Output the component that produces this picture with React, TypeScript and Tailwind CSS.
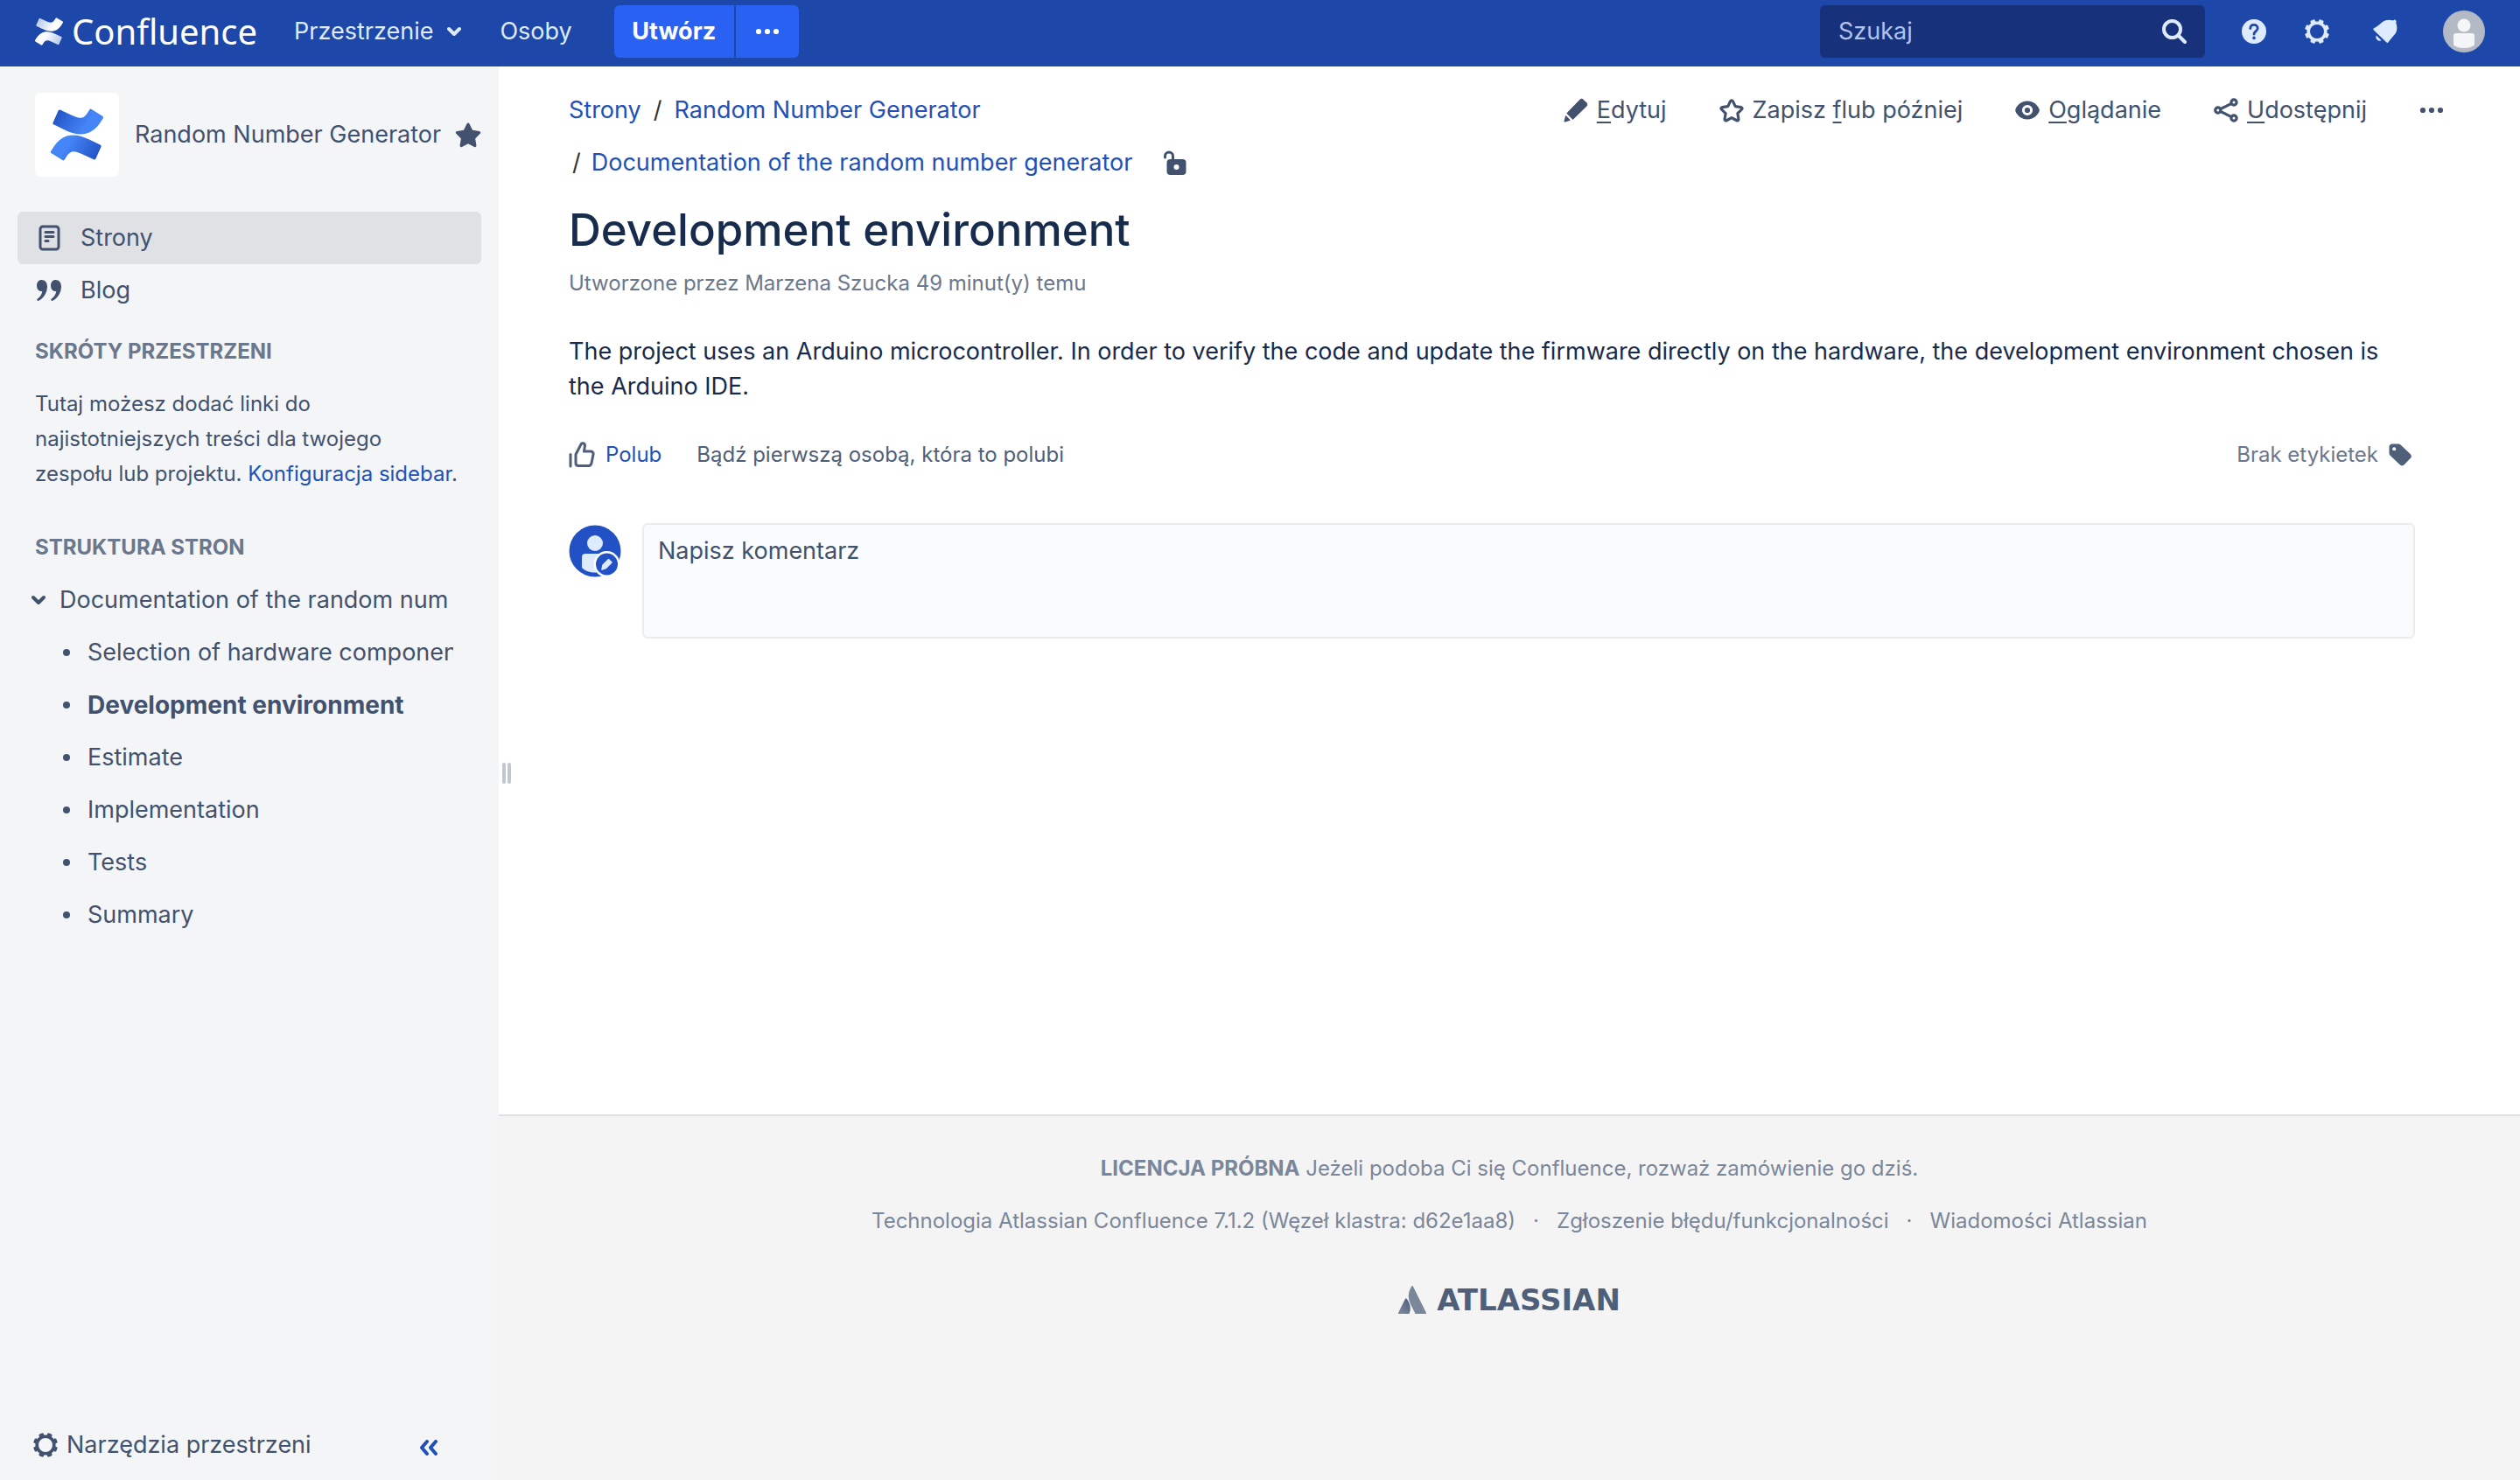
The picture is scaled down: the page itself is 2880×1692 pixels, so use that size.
import type { ReactNode } from 'react';

const CONF_PATH =
  'M.87 18.257c-.248.382-.53.875-.763 1.245a.764.764 0 0 0 .255 1.04l4.965 3.054a.764.764 0 0 0 1.058-.26c.199-.332.454-.763.733-1.221 1.967-3.247 3.945-2.853 7.508-1.146l4.957 2.337a.764.764 0 0 0 1.028-.382l2.364-5.346a.764.764 0 0 0-.382-1 599.851 599.851 0 0 1-4.965-2.361C10.911 10.97 5.224 11.185.87 18.257z';
const CONF_PATH_TOP =
  'M23.131 5.743c.249-.405.531-.875.764-1.25a.764.764 0 0 0-.256-1.034L18.675.404a.764.764 0 0 0-1.058.26c-.195.335-.451.763-.734 1.225-1.966 3.246-3.945 2.85-7.508 1.146L4.437.694a.764.764 0 0 0-1.027.382L1.046 6.422a.764.764 0 0 0 .382 1c1.039.49 3.105 1.467 4.965 2.361 6.698 3.246 12.392 3.029 16.738-4.04z';

function ConfluenceMark({ id, from, to, className }: { id: string; from: string; to: string; className: string }) {
  return (
    <svg viewBox="0 0 24 24" className={className} aria-hidden="true">
      <defs>
        <linearGradient id={`${id}-a`} x1="0" y1="0.4" x2="1" y2="0.7">
          <stop offset="0.3" stopColor={from} />
          <stop offset="1" stopColor={to} />
        </linearGradient>
        <linearGradient id={`${id}-b`} x1="1" y1="0.6" x2="0" y2="0.3">
          <stop offset="0.3" stopColor={from} />
          <stop offset="1" stopColor={to} />
        </linearGradient>
      </defs>
      <path d={CONF_PATH} fill={`url(#${id}-a)`} />
      <path d={CONF_PATH_TOP} fill={`url(#${id}-b)`} />
    </svg>
  );
}

type IconProps = { className?: string };

function ChevronDown({ className = '' }: IconProps) {
  return (
    <svg viewBox="0 0 16 12" className={`h-3 w-4 ${className}`} fill="none" stroke="currentColor" strokeWidth="4" strokeLinecap="round" strokeLinejoin="round" aria-hidden="true">
      <path d="M2 3l6 6 6-6" />
    </svg>
  );
}

function Dots({ className = '' }: IconProps) {
  return (
    <svg viewBox="0 0 28 28" className={`size-7 ${className}`} fill="currentColor" aria-hidden="true">
      <circle cx="4" cy="14" r="3.100" />
      <circle cx="14" cy="14" r="3.100" />
      <circle cx="24" cy="14" r="3.100" />
    </svg>
  );
}

function Gear({ className = '' }: IconProps) {
  return (
    <svg viewBox="0 0 28 28" className={`size-7 ${className}`} aria-hidden="true">
      <circle cx="14" cy="14" r="9.8" fill="none" stroke="currentColor" strokeWidth="3.6" />
      <g fill="currentColor">
        {[22.5, 67.5, 112.5, 157.5, 202.5, 247.5, 292.5, 337.5].map((a) => (
          <rect key={a} x="11.2" y="0" width="5.6" height="5" rx="1.4" transform={`rotate(${a} 14 14)`} />
        ))}
      </g>
    </svg>
  );
}

function SearchIcon() {
  return (
    <svg viewBox="0 0 28 28" className="size-7" fill="none" stroke="currentColor" strokeWidth="4" strokeLinecap="round" aria-hidden="true">
      <circle cx="11.5" cy="11.5" r="9.5" />
      <path d="M19 19l7 7" />
    </svg>
  );
}

function HelpIcon() {
  return (
    <svg viewBox="0 0 28 28" className="size-7" aria-hidden="true">
      <circle cx="14" cy="14" r="14" fill="currentColor" />
      <path d="M9.8 10.6C9.8 8 11.6 6.4 14 6.4s4.2 1.6 4.2 3.9c0 3.2-4.2 3.4-4.2 6.9" fill="none" stroke="#1d47a8" strokeWidth="2.8" strokeLinecap="round" />
      <circle cx="14" cy="21.4" r="1.8" fill="#1d47a8" />
    </svg>
  );
}

function BellIcon() {
  return (
    <svg viewBox="0 0 28 28" className="size-7" fill="currentColor" aria-hidden="true">
      <path d="M.8 10.500C5 8.500 7.500 5.500 11 3 14.500.6 19 .3 23 1.500l1-.8c1-.7 3 .8 2.600 2l-.4 1.300C27.800 8 28 13 25.500 16.500 22.500 20 20 23 17.500 26.300c-.5.800-1.300.8-2 .2L.7 12.200c-.6-.6-.6-1.300.1-1.700z" />
      <path d="M3.800 18.500l5.800 5.800c-3.800 1.500-7.500-2-5.800-5.800z" />
    </svg>
  );
}

function Avatar() {
  return (
    <svg viewBox="0 0 48 48" className="size-12" aria-hidden="true">
      <circle cx="24" cy="24" r="24" fill="#b3bac5" />
      <circle cx="24" cy="17" r="7.500" fill="#f4f5f7" />
      <path d="M12 29a3 3 0 0 1 3-3h18a3 3 0 0 1 3 3v10.500c-3 2.500-7.500 3.500-12 3.500s-9-1-12-3.500z" fill="#f4f5f7" />
    </svg>
  );
}

const STAR = 'M14 1.500c.7 0 1.200.4 1.500 1l3.200 6.700 7.200 1c1.400.2 1.900 1.700.9 2.700l-5.200 5.200 1.200 7.300c.2 1.300-1.200 2.200-2.300 1.600L14 23.500 7.500 27c-1.100.6-2.500-.3-2.300-1.600l1.200-7.300-5.200-5.200c-1-1-.5-2.500.9-2.700l7.200-1 3.200-6.700c.3-.6.800-1 1.500-1z';

function Star({ filled = false, className = 'size-7' }: { filled?: boolean; className?: string }) {
  return filled ? (
    <svg viewBox="0 0 28 28" className={className} fill="currentColor" aria-hidden="true">
      <path d={STAR} />
    </svg>
  ) : (
    <svg viewBox="-1.500 -1.500 31 31" className={className} fill="none" stroke="currentColor" strokeWidth="3.500" strokeLinejoin="round" aria-hidden="true">
      <path d={STAR} />
    </svg>
  );
}

function PageIcon() {
  return (
    <svg viewBox="0 0 26 30" className="h-[30px] w-[26px]" fill="none" stroke="currentColor" strokeWidth="3" strokeLinecap="round" aria-hidden="true">
      <rect x="2" y="2" width="21" height="26" rx="3" />
      <path d="M8 8.500h9M8 13.500h9" />
      <path d="M8 18.500h3" />
    </svg>
  );
}

function QuoteIcon() {
  return (
    <svg viewBox="0 0 30 26" className="h-[26px] w-[30px]" fill="currentColor" aria-hidden="true">
      <path d="M6.500 1C10.500 1 13 4 13 8.600 13 16 8.500 22.500 3.200 24.800c-1.700.6-2.600-1.300-1.200-2.300 3-2.200 4.800-5 5.300-8.500C3.500 14.400 1 11.500 1 7.500 1 3.700 3.300 1 6.500 1z" />
      <path d="M22.500 1C26.500 1 29 4 29 8.600 29 16 24.500 22.500 19.200 24.800c-1.700.6-2.600-1.300-1.200-2.300 3-2.200 4.800-5 5.300-8.500-3.800.4-6.300-2.500-6.300-6.500C17 3.700 19.300 1 22.500 1z" />
    </svg>
  );
}

function Pencil() {
  return (
    <svg viewBox="0 0 28 28" className="size-7" fill="currentColor" aria-hidden="true">
      <path d="M18.300 2c1.500-1.500 3-1.500 4.500-.1l3.400 3.400c1.400 1.500 1.400 3-.1 4.500L10.500 25 3.300 17.600z" />
      <path d="M2.300 19.800l5.600 5.700-6 1.900c-1 .3-1.600-.3-1.300-1.300z" />
    </svg>
  );
}

function Eye() {
  return (
    <svg viewBox="0 0 28 28" className="size-7" aria-hidden="true">
      <path d="M14 3.500c7 0 11.500 4.500 13.500 9 .4.900.4 2.100 0 3-2 4.500-6.500 9-13.500 9S2.500 20 .5 15.500c-.4-.9-.4-2.100 0-3C2.500 8 7 3.500 14 3.500z" fill="currentColor" />
      <circle cx="14" cy="14" r="4.600" fill="none" stroke="#fff" strokeWidth="3" />
    </svg>
  );
}

function Share() {
  return (
    <svg viewBox="0 0 28 28" className="size-7" fill="none" stroke="currentColor" strokeWidth="3.200" aria-hidden="true">
      <circle cx="4.800" cy="14" r="3.100" />
      <circle cx="23" cy="5" r="3.100" />
      <circle cx="23" cy="23" r="3.100" />
      <path d="M8 12.400l12.200-6M8 15.600l12.200 6" />
    </svg>
  );
}

function Unlock() {
  return (
    <svg viewBox="0 0 26 28" className="h-7 w-[26px]" aria-hidden="true">
      <path d="M1.500 8V6.500a4.500 4.500 0 0 1 9 0V12" fill="none" stroke="currentColor" strokeWidth="3" strokeLinecap="round" />
      <rect x="3.500" y="10" width="22" height="18" rx="4" fill="currentColor" />
      <circle cx="14.500" cy="19" r="3" fill="#fff" />
    </svg>
  );
}

function Thumb() {
  return (
    <svg viewBox="0 0 30 30" className="size-[30px]" fill="none" stroke="currentColor" strokeWidth="3" strokeLinejoin="round" strokeLinecap="round" aria-hidden="true">
      <path d="M8 14.500L13.500 4c1-3.500 5.500-3 4.800 1.500L17.500 11H25c2 0 3.500 1.500 3 3.500l-2 10c-.4 1.800-1.500 3-3.500 3h-11c-2 0-3.500-1.200-3.500-3z" />
      <path d="M2 14.500V28" />
    </svg>
  );
}

function Tag() {
  return (
    <svg viewBox="0 0 26 26" className="size-[26px]" aria-hidden="true">
      <path d="M.5 4C.5 2 2 .5 4 .5h6.500c1.300 0 2.400.5 3.300 1.300l10.800 10.300c1.600 1.600 1.600 3.400.1 5l-7 7.200c-1.600 1.500-3.400 1.500-5 0L1.900 14C1 13 .5 12 .5 10.700z" fill="currentColor" />
      <circle cx="6.200" cy="6.200" r="2" fill="#fff" />
    </svg>
  );
}

function CommentAvatar() {
  return (
    <svg viewBox="0 0 60 60" className="mt-0.5 size-[60px]" aria-hidden="true">
      <circle cx="30" cy="30" r="29.500" fill="#2151c4" />
      <circle cx="30" cy="21" r="9" fill="#deebff" />
      <path d="M15 37a4 4 0 0 1 4-4h22a4 4 0 0 1 4 4v12c-4 4-9 5.500-15 5.500S19 53 15 49z" fill="#deebff" />
      <circle cx="43.500" cy="45" r="15" fill="#fff" />
      <circle cx="43.500" cy="45" r="12.500" fill="#2151c4" />
      <path d="M45.500 39.500l3.500 3.500-6.500 6.500-4.500 1.500 1-5z" fill="#deebff" stroke="#deebff" strokeWidth="1.500" strokeLinejoin="round" />
    </svg>
  );
}

function AtlassianMark() {
  return (
    <svg viewBox="0 0 24 24" className="size-8" aria-hidden="true">
      <defs>
        <linearGradient id="atl" x1="1" y1="0.1" x2="0.3" y2="1">
          <stop offset="0" stopColor="#505f79" />
          <stop offset="1" stopColor="#7a869a" />
        </linearGradient>
      </defs>
      <path d="M7.120 11.084a.683.683 0 00-1.160.126L.075 22.974a.703.703 0 00.630 1.018h8.190a.678.678 0 00.630-.390c1.767-3.650.696-9.203-2.406-12.520z" fill="url(#atl)" />
      <path d="M11.434.386a15.515 15.515 0 00-.906 15.317l3.950 7.900a.703.703 0 00.628.388h8.190a.703.703 0 00.630-1.017L12.630.380a.664.664 0 00-1.196.006z" fill="#7a869a" />
    </svg>
  );
}

function ToolButton({ icon, children }: { icon: ReactNode; children: ReactNode }) {
  return (
    <button type="button" className="flex h-[60px] items-center gap-2.5 px-[30px] whitespace-nowrap text-[#42526e]">
      {icon}
      <span>{children}</span>
    </button>
  );
}

const U = ({ children }: { children: ReactNode }) => <span className="underline decoration-2 underline-offset-4">{children}</span>;

const PAGES = ['Selection of hardware components', 'Development environment', 'Estimate', 'Implementation', 'Tests', 'Summary'];

export default function App() {
  return (
    <div className="flex min-h-screen flex-col bg-white font-['Inter','Noto_Sans',sans-serif] text-[27px] leading-10 text-[#172b4d]">
      <header className="flex h-[76px] items-center border-b border-[#2a4a94] bg-[#1d47a8] pr-10 pb-[3px] pl-10 text-[#deebff]">
        <a href="#home" className="flex items-center gap-2.5 text-white">
          <ConfluenceMark id="hdr" from="#ffffff" to="#b4c6ec" className="size-8" />
          <span className="font-['Noto_Sans',sans-serif] text-[40px] leading-[58px]">Confluence</span>
        </a>
        <nav className="ml-[42px] flex items-center">
          <button type="button" className="flex items-center gap-4">
            Przestrzenie
            <ChevronDown />
          </button>
          <a href="#people" className="ml-11">Osoby</a>
        </nav>
        <div className="ml-12 flex h-[60px] gap-0.5 text-white">
          <button type="button" className="w-[137px] rounded-l-md bg-[#2962f2] font-bold">Utwórz</button>
          <button type="button" aria-label="Więcej" className="flex w-[72px] items-center justify-center rounded-r-md bg-[#2962f2]">
            <Dots />
          </button>
        </div>
        <div className="ml-auto flex items-center">
          <label className="flex h-[60px] w-[440px] items-center rounded-md bg-[#17327a] px-[21px]">
            <input type="search" aria-label="Szukaj" placeholder="Szukaj" className="min-w-0 flex-1 bg-transparent outline-none placeholder:text-[#b0c3ee]" />
            <SearchIcon />
          </label>
          <button type="button" aria-label="Pomoc" className="ml-[42px]"><HelpIcon /></button>
          <button type="button" aria-label="Ustawienia" className="ml-11"><Gear /></button>
          <button type="button" aria-label="Powiadomienia" className="ml-[50px]"><BellIcon /></button>
          <button type="button" aria-label="Profil" className="ml-[52px]"><Avatar /></button>
        </div>
      </header>

      <div className="flex flex-1">
        <aside className="flex w-[570px] shrink-0 flex-col bg-[#f4f5f7] text-[#42526e]">
          <div className="flex items-center pt-[30px] pl-10">
            <span className="flex size-24 shrink-0 items-center justify-center rounded-md bg-white">
              <ConfluenceMark id="space" from="#4485f7" to="#2252c4" className="size-[60px]" />
            </span>
            <a href="#space" className="ml-[18px] whitespace-nowrap">Random Number Generator</a>
            <Star filled className="ml-4 size-[30px] shrink-0" />
          </div>
          <nav className="mx-5 mt-10">
            <a href="#pages" className="flex h-[60px] items-center rounded-md bg-[#dfe1e5] pl-6">
              <span className="flex w-12"><PageIcon /></span>
              Strony
            </a>
            <a href="#blog" className="flex h-[60px] items-center pl-[21px]">
              <span className="flex w-[51px]"><QuoteIcon /></span>
              Blog
            </a>
          </nav>
          <section className="mt-5 pl-10">
            <h2 className="text-2xl leading-10 font-bold text-[#6b778c]">SKRÓTY PRZESTRZENI</h2>
            <p className="mt-5 w-[500px] text-2xl leading-10">
              Tutaj możesz dodać linki do
              <br />
              najistotniejszych treści dla twojego
              <br />
              zespołu lub projektu. <a href="#config" className="text-[#2151b8]">Konfiguracja sidebar</a>.
            </p>
          </section>
          <section className="mt-11">
            <h2 className="pl-10 text-2xl leading-10 font-bold text-[#6b778c]">STRUKTURA STRON</h2>
            <div className="mt-2.5 flex h-[60px] items-center pl-9">
              <button type="button" aria-label="Zwiń" className="flex"><ChevronDown /></button>
              <a href="#doc" className="ml-4 w-[445px] overflow-hidden whitespace-nowrap">Documentation of the random number generator</a>
            </div>
            <ul>
              {PAGES.map((p) => (
                <li key={p} className="flex h-[60px] items-center pl-[72px]">
                  <span className="size-2 rounded-full bg-[#42526e]" />
                  <a href="#page" className={p === 'Development environment' ? 'ml-5 w-[418px] overflow-hidden text-[28px] font-bold whitespace-nowrap' : 'ml-5 w-[418px] overflow-hidden whitespace-nowrap'}>
                    {p}
                  </a>
                </li>
              ))}
            </ul>
          </section>
          <div className="mt-auto flex h-20 items-center pr-[69px] pl-[38px]">
            <button type="button" className="flex items-center gap-2.5">
              <Gear />
              Narzędzia przestrzeni
            </button>
            <button type="button" aria-label="Zwiń pasek" className="ml-auto text-[#2151b8]">
              <svg viewBox="0 0 22 18" className="mt-1.5 h-[18px] w-[22px]" fill="none" stroke="currentColor" strokeWidth="4" strokeLinecap="round" strokeLinejoin="round" aria-hidden="true">
                <path d="M9 2L3 9l6 7M19 2l-6 7 6 7" />
              </svg>
            </button>
          </div>
        </aside>

        <div className="relative flex min-w-0 flex-1 flex-col">
          <button type="button" aria-label="Zmień szerokość" className="absolute top-[796px] left-1 flex h-6 gap-0.5">
            <span className="h-6 w-1 rounded-sm bg-[#c1c7d0]" />
            <span className="h-6 w-1 rounded-sm bg-[#c1c7d0]" />
          </button>
          <main className="flex-1 pt-5 pr-[120px] pl-20">
            <div className="-mr-[63px] flex items-start justify-between">
              <nav aria-label="Ścieżka" className="leading-[60px] text-[#2151b8]">
                <div className="flex">
                  <a href="#pages">Strony</a>
                  <span className="px-[14px] text-[#333]">/</span>
                  <a href="#space">Random Number Generator</a>
                </div>
                <div className="flex items-center">
                  <span className="pr-3 pl-1 text-[#333]">/</span>
                  <a href="#doc">Documentation of the random number generator</a>
                  <span className="ml-9 text-[#42526e]"><Unlock /></span>
                </div>
              </nav>
              <div className="flex">
                <ToolButton icon={<Pencil />}><U>E</U>dytuj</ToolButton>
                <ToolButton icon={<Star />}>Zapisz <U>f</U>lub później</ToolButton>
                <ToolButton icon={<Eye />}><U>O</U>glądanie</ToolButton>
                <ToolButton icon={<Share />}><U>U</U>dostępnij</ToolButton>
                <button type="button" aria-label="Więcej" className="flex h-[60px] items-center px-[30px] text-[#42526e]"><Dots /></button>
              </div>
            </div>
            <h1 className="mt-3 text-[51px] leading-[70px] font-medium">Development environment</h1>
            <p className="mt-1.5 text-2xl leading-10 text-[#6b778c]">Utworzone przez Marzena Szucka 49 minut(y) temu</p>
            <p className="mt-[38px]">
              The project uses an Arduino microcontroller. In order to verify the code and update the firmware directly on the hardware, the development environment chosen is the Arduino IDE.
            </p>
            <div className="mt-[38px] flex items-center text-2xl leading-10 text-[#505f79]">
              <button type="button" className="flex items-center gap-3">
                <Thumb />
                <span className="text-[#2151b8]">Polub</span>
              </button>
              <span className="ml-10">Bądź pierwszą osobą, która to polubi</span>
              <span className="ml-auto flex items-center gap-3 pr-1">
                <span className="text-[#6b778c]">Brak etykietek</span>
                <Tag />
              </span>
            </div>
            <div className="mt-[58px] flex items-start gap-6">
              <CommentAvatar />
              <textarea aria-label="Komentarz" placeholder="Napisz komentarz" className="h-[132px] flex-1 resize-none rounded-md border-2 border-[#ebecf0] bg-[#fafbfc] px-4 py-2.5 placeholder:text-[#42526e]" />
            </div>
          </main>
          <footer className="flex h-[418px] flex-col items-center border-t-2 border-[#dfe1e5] bg-[#f4f4f4] pt-10 text-2xl leading-10 text-[#7a869a]">
            <p><strong className="font-bold">LICENCJA PRÓBNA</strong> Jeżeli podoba Ci się Confluence, rozważ zamówienie go dziś.</p>
            <ul className="mt-5 flex gap-5">
              <li>Technologia Atlassian Confluence 7.1.2 (Węzeł klastra: d62e1aa8)</li>
              <li>·</li>
              <li><a href="#report">Zgłoszenie błędu/funkcjonalności</a></li>
              <li>·</li>
              <li><a href="#news">Wiadomości Atlassian</a></li>
            </ul>
            <a href="#atlassian" className="mt-[50px] flex items-center gap-3">
              <AtlassianMark />
              <span className="font-['DejaVu_Sans',sans-serif] text-[34px] font-bold text-[#505f79]">ATLASSIAN</span>
            </a>
          </footer>
        </div>
      </div>
    </div>
  );
}
